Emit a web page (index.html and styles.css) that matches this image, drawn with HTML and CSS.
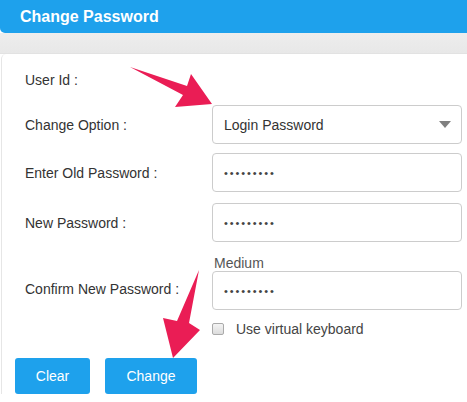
FILE: index.html
```html
<!DOCTYPE html>
<html lang="en">
<head>
  <meta charset="UTF-8">
  <title>Change Password</title>
  <link rel="stylesheet" href="styles.css">
</head>
<body>
  <div class="header">Change Password</div>
  <div class="band"></div>

  <div class="panel">
    <form id="form-password">
      <div class="row row-user">
        <label>User Id :</label>
        <span></span>
      </div>
      <div class="row row-option">
        <label>Change Option :</label>
        <div class="select">
          <span>Login Password</span>
          <span class="caret"></span>
        </div>
      </div>
      <div class="row row-old">
        <label>Enter Old Password :</label>
        <input type="password" value="123456789">
      </div>
      <div class="row row-new">
        <label>New Password :</label>
        <input type="password" value="123456789">
      </div>
      <div class="row row-hint">
        <span></span>
        <span class="hint">Medium</span>
      </div>
      <div class="row row-confirm">
        <label>Confirm New Password :</label>
        <input type="password" value="123456789">
      </div>
      <div class="row row-check">
        <span></span>
        <label class="check"><span class="box"></span>Use virtual keyboard</label>
      </div>
      <div class="actions">
        <button type="reset" class="btn btn-clear">Clear</button>
        <button type="submit" class="btn btn-change">Change</button>
      </div>
    </form>
  </div>

  <svg class="arrows" width="467" height="402" viewBox="0 0 467 402">
    <path d="M130,67 L187,86 L191,74 L212,104 L175,107 L183,95 Z" fill="#ea1d55"/>
    <path d="M199,270 L189,323 L200,330 L173,358 L163,318 L177,321 Z" fill="#ea1d55"/>
  </svg>
</body>
</html>
```

FILE: styles.css
```css
body {
  margin: 0;
  font-family: "Liberation Sans", Arial, sans-serif;
  font-size: 14px;
  color: #333;
  background: #fff;
  position: relative;
  width: 467px;
  height: 402px;
  overflow: hidden;
}
.header {
  height: 33px;
  line-height: 33px;
  padding-left: 20px;
  background-color: #1ea1ec;
  color: white;
  font-weight: bold;
  font-size: 16px;
  border-bottom-left-radius: 5px;
}
.band {
  height: 20px;
  background: linear-gradient(#ededed, #e8e8e8);
  border-bottom: 1px solid #e2e2e2;
}
.panel {
  margin-left: 1px;
  border-left: 1px solid #e6e6e6;
  border-top-left-radius: 5px;
  padding-top: 18px;
}
.row {
  display: grid;
  grid-template-columns: 187px 250px;
  align-items: center;
  padding-left: 23px;
}
.row label {
  line-height: 16px;
}
.row-user {
  height: 16px;
  margin-bottom: 17px;
}
.row-option {
  margin-bottom: 9px;
}
.row-old {
  margin-bottom: 11px;
}
.row-new {
  margin-bottom: 13px;
}
.row-confirm label {
  margin-top: -3px;
}
.select,
input {
  box-sizing: border-box;
  height: 39px;
  width: 250px;
  border: 1px solid #ccc;
  border-radius: 4px;
  background: #fff;
}
.select {
  display: flex;
  align-items: center;
  justify-content: space-between;
  padding: 0 10px 0 11px;
  color: #333;
}
.caret {
  width: 0;
  height: 0;
  border-left: 6px solid transparent;
  border-right: 6px solid transparent;
  border-top: 7px solid #808080;
}
input {
  font-family: "Liberation Sans", Arial, sans-serif;
  font-size: 11px;
  letter-spacing: 1.9px;
  padding: 0 11px;
  color: #444;
  outline: none;
}
.hint {
  color: #555;
  line-height: 16px;
  padding-left: 2px;
}
.row-check {
  margin-top: 11px;
}
.check {
  display: flex;
  align-items: center;
  color: #444;
}
.box {
  box-sizing: border-box;
  width: 12px;
  height: 12px;
  border: 1px solid #aaa;
  border-radius: 2px;
  background: linear-gradient(#f4f4f4, #dcdcdc);
  margin-right: 12px;
}
.actions {
  display: flex;
  gap: 15px;
  padding-left: 13px;
  margin-top: 21px;
}
.btn {
  height: 36px;
  font-family: "Liberation Sans", Arial, sans-serif;
  font-size: 14px;
  color: white;
  background-color: #1ea1ec;
  border: none;
  border-radius: 3px;
  cursor: pointer;
}
.btn-clear {
  width: 75px;
}
.btn-change {
  width: 92px;
}
.arrows {
  position: absolute;
  left: 0;
  top: 0;
  pointer-events: none;
}
```
